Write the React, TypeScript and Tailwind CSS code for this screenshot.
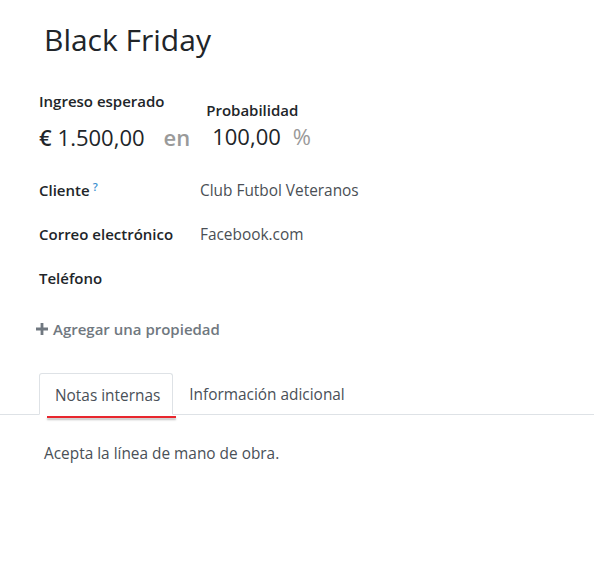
import React from 'react';

const font = { fontFamily: '"Open Sans", "Noto Sans", sans-serif' };

function Field({ label, value, help }: { label: string; value?: string; help?: boolean }) {
  return (
    <div className="flex h-[44px] items-start">
      <div className="w-[161px] text-[15px] font-semibold text-[#212529]">
        {label}
        {help && <sup className="ml-[3px] text-[11px] font-semibold text-[#3a8fd0]">?</sup>}
      </div>
      <div className="text-[15.4px] text-[#4a4f55]">{value}</div>
    </div>
  );
}

export default function App() {
  return (
    <div className="min-h-[568px] w-[594px] bg-white" style={font}>
      <h1 className="pl-[44px] pt-[20px] text-[30px] leading-[40px] text-[#212529]">Black Friday</h1>

      <div className="mt-[30px] flex pl-[39px]">
        <div>
          <div className="text-[15px] font-semibold leading-[22px] text-[#212529]">Ingreso esperado</div>
          <div className="mt-[10px] flex items-baseline text-[22px] leading-[30px]">
            <span className="font-semibold text-[#212529]">€</span>
            <span className="ml-[6px] text-[#212529]">1.500,00</span>
            <span className="ml-[19px] font-semibold text-[#9a9a9a]">en</span>
          </div>
        </div>
        <div className="ml-[16px] mt-[9px]">
          <div className="text-[15px] font-semibold leading-[22px] text-[#212529]">Probabilidad</div>
          <div className="flex items-baseline text-[22px] leading-[30px]">
            <span className="ml-[6px] text-[#212529]">100,00</span>
            <span className="ml-[12px] text-[#9a9a9a]">%</span>
          </div>
        </div>
      </div>

      <div className="mt-[27px] pl-[39px]">
        <Field label="Cliente" value="Club Futbol Veteranos" help />
        <Field label="Correo electrónico" value="Facebook.com" />
        <Field label="Teléfono" />
      </div>

      <div className="mt-[7px] flex items-center pl-[36px] text-[15px] font-semibold text-[#707880]">
        <svg width="12" height="12" viewBox="0 0 12 12" className="mr-[5px]">
          <path d="M4.6 0h2.8v4.6H12v2.8H7.4V12H4.6V7.4H0V4.6h4.6z" fill="#707880" />
        </svg>
        Agregar una propiedad
      </div>

      <div className="mt-[32px] flex border-b border-[#dee2e6] pl-[39px]">
        <div className="relative -mb-px rounded-t-[3px] border border-b-white border-[#dee2e6] pb-[7px] pl-[15px] pr-[12px] pt-[10px] text-[15.4px] text-[#495057]">
          Notas internas
          <div className="absolute -bottom-[4px] left-[7px] h-[2px] w-[129px] bg-[#e8262e] shadow-[0_2px_2px_rgba(0,0,0,0.25)]" />
        </div>
        <div className="px-[16px] pb-[7px] pt-[10px] text-[15.4px] text-[#495057]">Información adicional</div>
      </div>

      <div className="pl-[44px] pt-[27px] text-[15.4px] text-[#495057]">Acepta la línea de mano de obra.</div>
    </div>
  );
}
